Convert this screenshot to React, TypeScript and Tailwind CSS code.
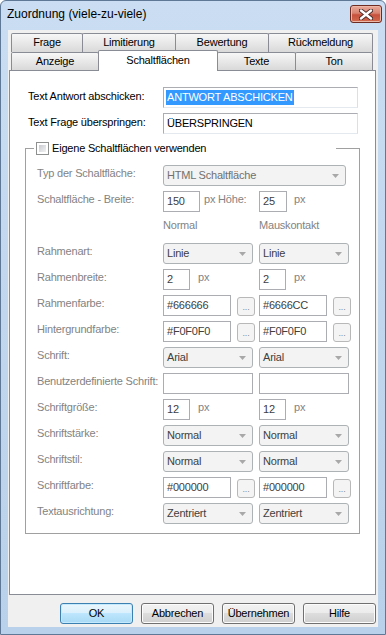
import React from "react";

const tabBg = "bg-linear-to-b from-[#F7F7F7] to-[#D9D9D9]";
const tab =
  "flex items-center justify-center border border-b-0 border-[#898C95] rounded-t-[2px] text-black";

function Input({ w, value }: { w: string; value?: string }) {
  return (
    <div
      className={`${w} h-[21px] shrink-0 flex items-center pl-[3px] border border-[#ABADB3] bg-white text-[#404040]`}
    >
      {value}
    </div>
  );
}

function Select({ w, value, dim }: { w: string; value: string; dim?: boolean }) {
  return (
    <div
      className={`${w} h-[21px] shrink-0 flex items-center justify-between pl-[3px] pr-[6px] border border-[#ADB2B5] rounded-[3px] bg-[#F3F3F3] ${
        dim ? "text-[#707070]" : "text-[#404040]"
      }`}
    >
      <span>{value}</span>
      <svg width="7" height="4" viewBox="0 0 7 4">
        <path d="M0 0h7L3.5 4z" fill="#A8A8A8" />
      </svg>
    </div>
  );
}

function Dots() {
  return (
    <div className="ml-[6px] w-[18px] h-[19px] self-end flex items-end justify-center pb-[3px] border border-[#B8B8B8] rounded-[3px] bg-[#F4F4F4] text-[9px] leading-[9px] text-[#8A8A8A]">
      ...
    </div>
  );
}

function Row({ label, children }: { label: string; children: React.ReactNode }) {
  return (
    <div className="flex h-[21px]">
      <div className="w-[126px] shrink-0 pt-[1px] leading-[15px]">{label}</div>
      {children}
    </div>
  );
}

function Cell({ children }: { children?: React.ReactNode }) {
  return <div className="w-[96px] shrink-0 flex items-center">{children}</div>;
}

function Unit({ text, ml }: { text: string; ml: string }) {
  return <span className={`${ml} self-start pt-[1px] leading-[15px]`}>{text}</span>;
}

function Button({ label, primary }: { label: string; primary?: boolean }) {
  return (
    <div
      className={`w-[73px] h-[21px] flex items-center justify-center rounded-[3px] border text-black ${
        primary
          ? "border-[#3C7FB1] bg-[linear-gradient(#EAF6FD,#D9F0FC_50%,#BEE6FD_50%,#A7D9F5)] shadow-[inset_0_0_0_1px_#C5EAFD]"
          : "border-[#707070] bg-[linear-gradient(#F2F2F2,#EBEBEB_50%,#DDDDDD_50%,#CFCFCF)] shadow-[inset_0_0_0_1px_#FCFCFC]"
      }`}
    >
      {label}
    </div>
  );
}

export default function App() {
  return (
    <div className="w-[386px] h-[635px] font-['Liberation_Sans',Arial,sans-serif] text-[11px] tracking-[-0.2px] leading-[15px]">
      <div className="w-full h-full flex flex-col border border-[#5F7896] rounded-t-[6px] bg-linear-to-b from-[#CADDF2] to-[#B9D1EA] px-[7px] pb-[7px]">
        {/* title bar */}
        <div className="h-[29px] shrink-0 flex justify-between -mx-[7px]">
          <span className="pl-[6px] pt-[6px] text-[12px] tracking-normal text-black">
            Zuordnung (viele-zu-viele)
          </span>
          <div className="mt-[4px] mr-[3px] w-[32px] h-[18px] flex items-center justify-center rounded-[3px] border border-[#6E2B22] bg-[linear-gradient(#E9A99A,#D88370_45%,#C7503D_55%,#D26A4E)] shadow-[inset_0_0_0_1px_#EDB7A8]">
            <svg width="14" height="11" viewBox="0 0 14 11">
              <path d="M2 1.5l10 8M12 1.5l-10 8" stroke="#4A2A26" strokeWidth="4.2" strokeLinecap="round" />
              <path d="M2 1.5l10 8M12 1.5l-10 8" stroke="#FFFFFF" strokeWidth="2.4" strokeLinecap="round" />
            </svg>
          </div>
        </div>

        {/* client area */}
        <div className="flex-1 bg-[#F0F0F0] pt-[3px]">
          {/* back row of tabs */}
          <div className="flex ml-[3px] h-[19px]">
            <div className={`${tab} ${tabBg} w-[72px] pb-[2px]`}>Frage</div>
            <div className={`${tab} ${tabBg} -ml-px w-[94px] pb-[2px]`}>Limitierung</div>
            <div className={`${tab} ${tabBg} -ml-px w-[94px] pb-[2px]`}>Bewertung</div>
            <div className={`${tab} ${tabBg} -ml-px w-[105px] pb-[2px]`}>Rückmeldung</div>
          </div>
          {/* front row of tabs */}
          <div className="flex items-end ml-[3px] -mt-[2px] h-[20px]">
            <div className={`${tab} ${tabBg} w-[88px] h-[18px]`}>Anzeige</div>
            <div className={`${tab} relative z-10 -ml-px -mb-px w-[120px] h-[21px] bg-white pb-[1px]`}>
              Schaltflächen
            </div>
            <div className={`${tab} ${tabBg} -ml-px w-[79px] h-[18px]`}>Texte</div>
            <div className={`${tab} ${tabBg} -ml-px w-[78px] h-[18px]`}>Ton</div>
          </div>

          {/* tab page */}
          <div className="ml-[1px] w-[367px] h-[525px] border border-[#898C95] bg-white pt-[16px] text-black">
            <div className="flex flex-col gap-[5px] pl-[18px]">
              <div className="flex items-center h-[21px]">
                <span className="w-[135px] shrink-0 pb-[2px]">Text Antwort abschicken:</span>
                <div className="w-[195px] h-[21px] flex items-center pl-[2px] border border-[#ABADB3] border-r-[#DBDFE6] border-b-[#E3E9EF] bg-white">
                  <span className="bg-[#3399FF] text-white px-[1px] leading-[15px]">ANTWORT ABSCHICKEN</span>
                </div>
              </div>
              <div className="flex items-center h-[21px]">
                <span className="w-[135px] shrink-0 pb-[2px]">Text Frage überspringen:</span>
                <div className="w-[195px] h-[21px] flex items-center pl-[3px] border border-[#ABADB3] border-r-[#DBDFE6] border-b-[#E3E9EF] bg-white">
                  ÜBERSPRINGEN
                </div>
              </div>
            </div>

            <fieldset className="ml-[15px] mt-[7px] w-[335px] border border-[#A0A0A0] p-0">
              <legend className="ml-[8px] w-[302px] h-[15px] p-0 bg-white">
                <div className="flex items-center h-[15px] pl-[2px]">
                  <div className="w-[13px] h-[13px] border border-[#8E8F8F] bg-white p-[2px]">
                    <div className="w-full h-full bg-linear-to-br from-[#C8CBD0] to-[#F2F2F2]" />
                  </div>
                  <span className="ml-[3px] text-black">Eigene Schaltflächen verwenden</span>
                </div>
              </legend>

              <div className="flex flex-col gap-[5px] pl-[11px] pt-[9px] pb-[9px] text-[#838383]">
                <Row label="Typ der Schaltfläche:">
                  <Select w="w-[183px]" value="HTML Schaltfläche" dim />
                </Row>
                <Row label="Schaltfläche - Breite:">
                  <Cell>
                    <Input w="w-[37px]" value="150" />
                    <Unit text="px Höhe:" ml="ml-[4px]" />
                  </Cell>
                  <Cell>
                    <Input w="w-[28px]" value="25" />
                    <Unit text="px" ml="ml-[7px]" />
                  </Cell>
                </Row>
                <Row label="">
                  <Cell>
                    <Unit text="Normal" ml="ml-0" />
                  </Cell>
                  <Cell>
                    <Unit text="Mauskontakt" ml="ml-0" />
                  </Cell>
                </Row>
                <Row label="Rahmenart:">
                  <Cell>
                    <Select w="w-[90px]" value="Linie" />
                  </Cell>
                  <Cell>
                    <Select w="w-[90px]" value="Linie" />
                  </Cell>
                </Row>
                <Row label="Rahmenbreite:">
                  <Cell>
                    <Input w="w-[27px]" value="2" />
                    <Unit text="px" ml="ml-[8px]" />
                  </Cell>
                  <Cell>
                    <Input w="w-[27px]" value="2" />
                    <Unit text="px" ml="ml-[8px]" />
                  </Cell>
                </Row>
                <Row label="Rahmenfarbe:">
                  <Cell>
                    <Input w="w-[68px]" value="#666666" />
                    <Dots />
                  </Cell>
                  <Cell>
                    <Input w="w-[68px]" value="#6666CC" />
                    <Dots />
                  </Cell>
                </Row>
                <Row label="Hintergrundfarbe:">
                  <Cell>
                    <Input w="w-[68px]" value="#F0F0F0" />
                    <Dots />
                  </Cell>
                  <Cell>
                    <Input w="w-[68px]" value="#F0F0F0" />
                    <Dots />
                  </Cell>
                </Row>
                <Row label="Schrift:">
                  <Cell>
                    <Select w="w-[90px]" value="Arial" />
                  </Cell>
                  <Cell>
                    <Select w="w-[90px]" value="Arial" />
                  </Cell>
                </Row>
                <Row label="Benutzerdefinierte Schrift:">
                  <Cell>
                    <Input w="w-[90px]" />
                  </Cell>
                  <Cell>
                    <Input w="w-[90px]" />
                  </Cell>
                </Row>
                <Row label="Schriftgröße:">
                  <Cell>
                    <Input w="w-[27px]" value="12" />
                    <Unit text="px" ml="ml-[8px]" />
                  </Cell>
                  <Cell>
                    <Input w="w-[27px]" value="12" />
                    <Unit text="px" ml="ml-[8px]" />
                  </Cell>
                </Row>
                <Row label="Schriftstärke:">
                  <Cell>
                    <Select w="w-[90px]" value="Normal" />
                  </Cell>
                  <Cell>
                    <Select w="w-[90px]" value="Normal" />
                  </Cell>
                </Row>
                <Row label="Schriftstil:">
                  <Cell>
                    <Select w="w-[90px]" value="Normal" />
                  </Cell>
                  <Cell>
                    <Select w="w-[90px]" value="Normal" />
                  </Cell>
                </Row>
                <Row label="Schriftfarbe:">
                  <Cell>
                    <Input w="w-[68px]" value="#000000" />
                    <Dots />
                  </Cell>
                  <Cell>
                    <Input w="w-[68px]" value="#000000" />
                    <Dots />
                  </Cell>
                </Row>
                <Row label="Textausrichtung:">
                  <Cell>
                    <Select w="w-[90px]" value="Zentriert" />
                  </Cell>
                  <Cell>
                    <Select w="w-[90px]" value="Zentriert" />
                  </Cell>
                </Row>
              </div>
            </fieldset>
          </div>

          {/* dialog buttons */}
          <div className="flex justify-end gap-[8px] mt-[8px] pr-[2px]">
            <Button label="OK" primary />
            <Button label="Abbrechen" />
            <Button label="Übernehmen" />
            <Button label="Hilfe" />
          </div>
        </div>
      </div>
    </div>
  );
}
